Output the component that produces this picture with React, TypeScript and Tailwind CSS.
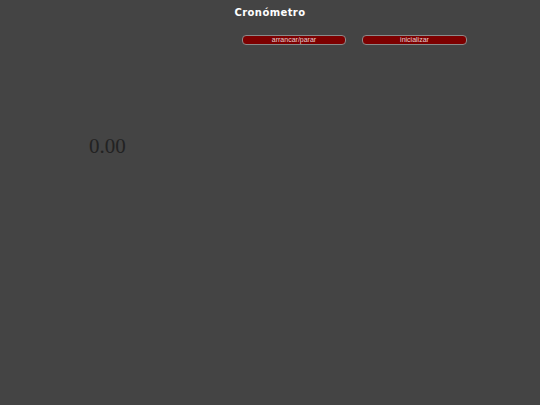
export default function App() {
  return (
    <div className="min-h-[405px] w-full bg-[#444444] font-['Liberation_Sans',Arial,sans-serif]">
      <h1 className="pt-[6px] text-center font-['DejaVu_Sans',sans-serif] text-[10px] leading-[14px] font-black tracking-[0.4px] text-white">
        Cronómetro
      </h1>
      <div className="mt-[15px] flex pl-[242px]">
        <button className="h-[10px] w-[104px] rounded-[4px] border border-[#8a8a8a] bg-[#7d0000] text-[7px] leading-[8px] text-[#e6d2d2]">
          arrancar/parar
        </button>
        <button className="ml-[16px] h-[10px] w-[105px] rounded-[4px] border border-[#8a8a8a] bg-[#7d0000] text-[7px] leading-[8px] text-[#e6d2d2]">
          inicializar
        </button>
      </div>
      <div className="mt-[89px] pl-[89px] font-['Liberation_Serif',serif] text-[21px] leading-[24px] text-[#222222]">
        0.00
      </div>
    </div>
  )
}
